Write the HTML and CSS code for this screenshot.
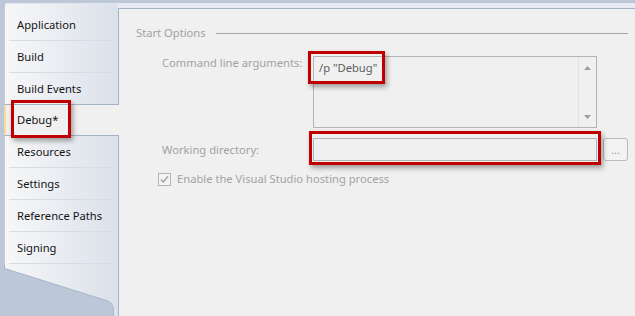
FILE: index.html
```html
<!DOCTYPE html>
<html>
<head>
<meta charset="utf-8">
<link rel="stylesheet" href="styles.css">
</head>
<body>
<div class="window">
  <div class="sidebar">
    <div class="group group-top">
      <div class="tab">Application</div>
      <div class="tab">Build</div>
      <div class="tab">Build Events</div>
    </div>
    <div class="tab-selected">Debug*</div>
    <div class="group-bottom">
      <div class="group tabs">
        <div class="tab">Resources</div>
        <div class="tab">Settings</div>
        <div class="tab">Reference Paths</div>
        <div class="tab">Signing</div>
      </div>
      <svg class="tail" width="114" height="52" viewBox="0 0 114 52">
        <defs>
          <linearGradient id="tg" x1="0" y1="0" x2="114" y2="0" gradientUnits="userSpaceOnUse">
            <stop offset="0" stop-color="#f6f6f7"/>
            <stop offset="1" stop-color="#dbe1ea"/>
          </linearGradient>
        </defs>
        <path d="M0 0 H114 V52 H109 V44 Q109 39 104 37 L0 4 Z" fill="url(#tg)"/>
        <path d="M0.5 0 V4.5 L104 37 Q108.5 39 109.5 44 V52" fill="none" stroke="#a9b7ca" stroke-width="1"/>
      </svg>
    </div>
  </div>
  <div class="main">
    <div class="panel">
      <div class="section-head"><span>Start Options</span><span class="rule"></span></div>
      <div class="form">
        <div class="lbl lbl-top">Command line arguments:</div>
        <div class="textarea">
          <div class="ta-text">/p "Debug"</div>
          <div class="vscroll">
            <svg width="7" height="4" viewBox="0 0 7 4"><path d="M0 4 L3.5 0 L7 4 Z" fill="#9c9c9c"/></svg>
            <svg width="7" height="4" viewBox="0 0 7 4"><path d="M0 0 L7 0 L3.5 4 Z" fill="#9c9c9c"/></svg>
          </div>
        </div>
        <div></div>
        <div class="lbl lbl-mid">Working directory:</div>
        <div class="input"></div>
        <div class="btn">...</div>
      </div>
      <div class="check-row">
        <span class="checkbox">
          <svg width="11" height="11" viewBox="0 0 11 11"><path d="M2 5.5 L4.3 8 L9 2.2" fill="none" stroke="#a8a8a8" stroke-width="1.6"/></svg>
        </span>
        <span class="check-label">Enable the Visual Studio hosting process</span>
      </div>
    </div>
  </div>
  <div class="callout c-debug"></div>
  <div class="callout c-args"></div>
  <div class="callout c-dir"></div>
</div>
</body>
</html>
```

FILE: styles.css
```css
* { box-sizing: border-box; }
body {
  margin: 0;
  font-family: "Noto Sans", "Open Sans", sans-serif;
  font-size: 11.2px;
  background: #bcc8d8;
}
.window {
  position: relative;
  width: 635px;
  height: 316px;
  display: flex;
  padding-top: 3px;
  background: #bcc8d8;
  overflow: hidden;
}
.sidebar {
  width: 114px;
  margin-left: 4px;
  flex-shrink: 0;
  display: flex;
  flex-direction: column;
}
.group {
  background: linear-gradient(to right, #f7f7f8, #dbe1ea);
  border-left: 1px solid #c5ccd6;
}
.group-top {
  border-top: 1px solid #e4e8ee;
  border-bottom: 1px solid #a3b3c9;
  border-top-left-radius: 3px;
  padding-top: 5px;
}
.tab {
  height: 32px;
  line-height: 31px;
  margin-left: 4px;
  margin-right: 6px;
  padding-left: 8px;
  color: #141414;
  border-bottom: 1px solid #d6dce5;
  white-space: nowrap;
}
.group-top .tab:last-child {
  height: 31px;
  border-bottom: none;
}
.tab-selected {
  position: relative;
  z-index: 1;
  height: 30px;
  width: 115px;
  margin-right: -1px;
  line-height: 30px;
  padding-left: 11px;
  color: #141414;
  background: #f0f0f0;
  border-left: 2px solid #f3dc9c;
}
.group-bottom {
  flex: 1;
  display: flex;
  flex-direction: column;
}
.tabs {
  border-top: 1px solid #a3b3c9;
}
.tail {
  display: block;
  flex: 1;
}
.main {
  flex: 1;
  display: flex;
  flex-direction: column;
  padding-top: 5px;
  background: #e8ecf2;
}
.panel {
  flex: 1;
  background: #f0f0f0;
  border-top: 1px solid #a3b3c9;
  border-left: 1px solid #a3b3c9;
  padding: 16px 7px 0 17px;
  color: #a2a2a2;
}
.section-head {
  display: flex;
  align-items: center;
  line-height: 16px;
  white-space: nowrap;
}
.rule {
  flex: 1;
  height: 1px;
  margin-left: 10px;
  background: #a6a6a6;
}
.form {
  display: grid;
  grid-template-columns: 151px 284px 31px;
  row-gap: 10px;
  margin: 15px 0 0 26px;
}
.lbl {
  line-height: 16px;
  white-space: nowrap;
}
.lbl-top {
  align-self: start;
  margin-top: -1px;
}
.lbl-mid {
  align-self: center;
}
.textarea {
  height: 72px;
  display: flex;
  border: 1px solid #b4b4b4;
  background: #f0f0f0;
}
.ta-text {
  flex: 1;
  padding: 3px 0 0 5px;
  line-height: 16px;
  color: #5c5c5c;
}
.vscroll {
  width: 18px;
  display: flex;
  flex-direction: column;
  justify-content: space-between;
  align-items: center;
  padding: 9px 0 8px;
  border-left: 1px solid #e2e2e2;
}
.vscroll svg {
  display: block;
}
.input {
  height: 23px;
  border: 1px solid #b4b4b4;
  background: #f0f0f0;
}
.btn {
  justify-self: end;
  width: 25px;
  height: 23px;
  border: 1px solid #bababa;
  border-radius: 3px;
  background: #f3f3f3;
  color: #9c9ca8;
  display: flex;
  align-items: center;
  justify-content: center;
  line-height: 1;
  font-size: 11px;
}
.check-row {
  display: flex;
  align-items: center;
  margin: 10px 0 0 22px;
  line-height: 16px;
}
.checkbox {
  width: 13px;
  height: 13px;
  border: 1px solid #b4b4b4;
  background: #f4f4f4;
  display: flex;
  align-items: center;
  justify-content: center;
  margin-right: 6px;
}
.checkbox svg {
  display: block;
}
.callout {
  position: absolute;
  z-index: 2;
  border: 3px solid #c00000;
  box-shadow: 2px 3px 5px rgba(0, 0, 0, 0.35);
}
.c-debug { left: 11px; top: 100px; width: 60px; height: 38px; }
.c-args { left: 308px; top: 51px; width: 77px; height: 33px; }
.c-dir { left: 309px; top: 131px; width: 292px; height: 34px; }
```
